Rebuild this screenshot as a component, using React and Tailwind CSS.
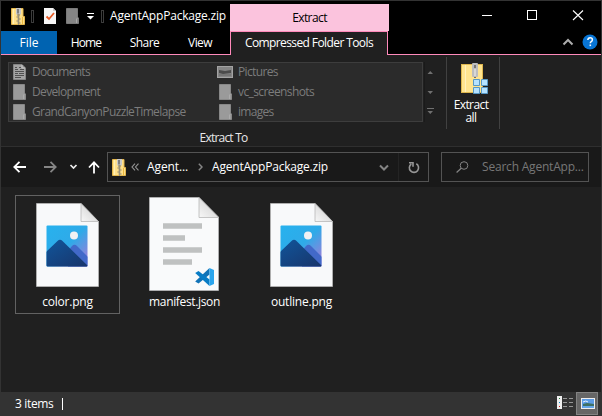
import React from 'react';

function ZipIcon({ className }) {
  return (
    <svg className={className} viewBox="0 0 14 17" aria-hidden="true">
      <path d="M0.5 0.5H12v8h1.5v8H0.5z" fill="#ffe08a" stroke="#e3b64c" />
      <path d="M2.5 1v15" stroke="#fff0b5" />
      <path d="M11.5 9v7" stroke="#eab83f" />
      <rect x="5" y="0" width="5" height="6.5" fill="#c9c9c9" />
      <rect x="6" y="1" width="2" height="4.5" fill="#808080" />
      <path d="M6 7h3M5.500 9h3M6.500 11h3M5.500 13h3M6.500 15h3" stroke="#77736a" strokeWidth="1" />
      <path d="M7.5 6v11" stroke="#99917c" strokeWidth="1" />
    </svg>
  );
}

function FolderIcon({ fill = '#9a9a9a', stroke = '#888888', className }) {
  return (
    <svg className={className} viewBox="0 0 14 16" aria-hidden="true">
      <path d="M0.500 0.500H11.500V10H12.500V15.500H0.500z" fill={fill} stroke={stroke} />
      <path d="M10.500 15v-4l1.500-1.500" stroke="#b3b3b3" strokeWidth="1" fill="none" opacity=".7" />
    </svg>
  );
}

function DocIcon() {
  return (
    <svg className="h-4 w-[14px]" viewBox="0 0 14 16" aria-hidden="true">
      <path d="M0.500 0.500H9L12.500 4V15.500H0.500z" fill="#a3a3a3" stroke="#858585" />
      <path d="M2 5.500h3M2 3.500h2M6 3.500h2M7 5.500h4M2 7.500h9M2 9.500h3M6 9.500h5M2 11.500h9M2 13.500h6" stroke="#505050" />
      <path d="M9 1v3h3" stroke="#c6c6c6" fill="none" />
    </svg>
  );
}

function PictureIcon() {
  return (
    <svg className="h-3 w-4" viewBox="0 0 16 12" aria-hidden="true">
      <rect x=".5" y=".5" width="15" height="11" fill="#858585" stroke="#a3a3a3" />
      <rect x="2" y="2" width="12" height="8" fill="#858585" />
      <path d="M2 4l6 1 6-1v3l-8 1-4-1z" fill="#4b4b4b" />
      <path d="M2 9h12" stroke="#666" />
    </svg>
  );
}

function ListEntry({ icon, label, text }) {
  return (
    <div className="flex h-5 items-center">
      <div className="flex w-[19px] items-center">{icon}</div>
      <span className={'whitespace-nowrap text-[12px] leading-5 text-[#7c7c7c] ' + text}>{label}</span>
    </div>
  );
}

function ImageFile({ id }) {
  return (
    <svg className="mb-[4px] h-[85px] w-[64px]" viewBox="0 0 64 85" aria-hidden="true">
      <defs>
        <linearGradient id={id + 'sky'} x1="0" y1="0" x2="1" y2="1">
          <stop offset="0" stopColor="#27b2ee" />
          <stop offset=".5" stopColor="#2faae8" />
          <stop offset=".85" stopColor="#8b84dc" />
        </linearGradient>
        <linearGradient id={id + 'hill'} x1="0" y1="0" x2="1" y2="1">
          <stop offset="0" stopColor="#10559b" />
          <stop offset="1" stopColor="#193469" />
        </linearGradient>
        <linearGradient id={id + 'fold'} x1="0" y1="1" x2="1" y2="0">
          <stop offset="0" stopColor="#f7f7f7" />
          <stop offset="1" stopColor="#c9c9c9" />
        </linearGradient>
        <clipPath id={id + 'clip'}><rect x="10.500" y="22.500" width="41" height="41" rx="1" /></clipPath>
      </defs>
      <path d="M.5.5H45L62.500 18.500V83.500H.5z" fill="#f8f9fa" stroke="#bdbdbd" strokeWidth=".7" />
      <path d="M45 .5V18.500H62.500z" fill={'url(#' + id + 'fold)'} stroke="#b8b8b8" strokeWidth=".8" />
      <g clipPath={'url(#' + id + 'clip)'}>
        <path d="M10 22h42v42H10z" fill={'url(#' + id + 'sky)'} />
        <path d="M32 48l4-5q2.500-2.500 5 0l12 12v9H32z" fill="#4269c9" />
        <path d="M10 49l11.500-11q2.500-2.500 5 0L53 64H10z" fill={'url(#' + id + 'hill)'} />
      </g>
      <circle cx="38" cy="32.500" r="4" fill="#f1f1f3" />
    </svg>
  );
}

function JsonFile() {
  return (
    <svg className="mb-px h-[94px] w-[71px]" viewBox="0 0 71 94" aria-hidden="true">
      <defs>
        <linearGradient id="jfold" x1="0" y1="1" x2="1" y2="0">
          <stop offset="0" stopColor="#f7f7f7" />
          <stop offset="1" stopColor="#c9c9c9" />
        </linearGradient>
      </defs>
      <path d="M.5.5H50L69.500 20V93.500H.5z" fill="#f9fafb" stroke="#bdbdbd" strokeWidth=".7" />
      <path d="M50 .5V20.500H69.500z" fill="url(#jfold)" stroke="#b8b8b8" strokeWidth=".8" />
      <path d="M14 29h39M14 41h22M14 53h39M14 65h29" stroke="#bfc1c1" strokeWidth="5.500" />
      <path d="M60.500 71v6.500L49.500 86.500l-3.300-2z" fill="#1173b7" />
      <path d="M60.500 89v-6.500L49.500 74l-3.300 2z" fill="#087cc5" />
      <path d="M60.500 71L65 73v14l-4.500 2z" fill="#2aa5ed" />
    </svg>
  );
}

function FileTile({ children, name, tile, text }) {
  return (
    <div className={'flex h-[119px] flex-col items-center ' + tile}>
      <div className="flex h-[96px] items-end justify-center">{children}</div>
      <span className={'whitespace-nowrap text-[12px] leading-[20px] text-white ' + text}>{name}</span>
    </div>
  );
}

function Separator({ className }) {
  return <div className={'h-[13px] w-[3px] border border-[#3c3c3c] ' + className} />;
}

export default function App() {
  return (
    <div className="flex h-[416px] w-[602px] flex-col overflow-hidden border-l border-t border-r border-[#333333] bg-[#202020] font-['Open_Sans','Noto_Sans',sans-serif] text-[12px] text-white">
      <header className="flex h-[54px] shrink-0 bg-black">
        <div className="flex w-[229px] flex-col">
          <div className="flex h-[30px] items-center">
            <ZipIcon className="ml-[10px] h-[17px] w-[14px]" />
            <Separator className="ml-[6px]" />
            <svg className="ml-[10px] h-4 w-3" viewBox="0 0 12 16" aria-hidden="true">
              <path d="M0 0h9l3 3v13H0z" fill="#f6f6f6" />
              <path d="M9 0v3h3" fill="#ccc" />
              <path d="M2.500 8.500L5 11l5-6" fill="none" stroke="#e85b26" strokeWidth="1.800" />
            </svg>
            <FolderIcon className="ml-[10px] h-4 w-[14px]" fill="#858585" stroke="#797979" />
            <svg className="ml-[7px] h-[7px] w-[7px]" viewBox="0 0 7 7" aria-hidden="true">
              <path d="M0 .5h7" stroke="#fff" />
              <path d="M0 3h7L3.500 6.500z" fill="#fff" />
            </svg>
            <Separator className="ml-[7px]" />
            <span className="ml-[6px] whitespace-nowrap text-[12px] tracking-[-0.2px]">AgentAppPackage.zip</span>
          </div>
          <nav className="flex h-6 border-b border-[#ff8abb] leading-[23px]">
            <span className="w-14 bg-[#0063b1] text-center">File</span>
            <span className="w-[58px] text-center tracking-[-0.9px]">Home</span>
            <span className="w-[59px] text-center tracking-[-0.6px]">Share</span>
            <span className="w-[52px] text-center tracking-[-0.6px]">View</span>
          </nav>
        </div>
        <div className="flex w-[159px] flex-col pt-[3px]">
          <div className="h-[27px] bg-[#fbc3dd] text-center leading-[27px] tracking-[-0.6px] text-black">Extract</div>
          <div className="h-6 w-[158px] whitespace-nowrap border-x border-t border-[#ff8abb] bg-[#202020] text-center leading-[22px] tracking-[-0.6px]">Compressed Folder Tools</div>
        </div>
        <div className="-ml-px flex flex-1 flex-col border-b border-[#ff8abb]">
          <svg className="h-[53px] w-[212px]" viewBox="388 1 212 53" fill="none" aria-hidden="true">
            <path d="M482 15.500h10" stroke="#fff" />
            <rect x="527.500" y="10.500" width="9" height="9" stroke="#fff" />
            <path d="M573 10.500l10 9.500M583 10.500L573 20" stroke="#fff" strokeWidth="1.100" />
            <path d="M563.500 44.500l4.500-4.500 4.500 4.500" stroke="#adadad" strokeWidth="2" />
            <circle cx="590" cy="42" r="7.500" fill="#0875d5" />
            <path d="M587.800 40q.2-2.300 2.400-2.300t2.200 2q0 1.200-1.200 2-.9.600-.9 1.500" stroke="#fff" strokeWidth="1.500" />
            <rect x="589.500" y="44.500" width="1.600" height="1.600" fill="#fff" />
          </svg>
        </div>
      </header>

      <section className="flex h-[92px] shrink-0 border-b border-[#2f2f2f]">
        <div className="flex w-[445px] flex-col pl-[7px] pt-[7px]">
          <div className="flex h-[60px]">
            <div className="flex w-[415px] border border-[#3d3d3d] bg-[#2b2b2b] pl-1">
              <div className="-mt-px w-[204px]">
                <ListEntry icon={<DocIcon />} label="Documents" text="tracking-[-0.7px]" />
                <ListEntry icon={<FolderIcon className="h-4 w-[14px]" />} label="Development" text="tracking-[-0.65px]" />
                <ListEntry icon={<FolderIcon className="h-4 w-[14px]" />} label="GrandCanyonPuzzleTimelapse" text="tracking-[-0.62px]" />
              </div>
              <div className="-mt-px">
                <ListEntry icon={<PictureIcon />} label="Pictures" text="ml-[2px] tracking-[-0.65px]" />
                <ListEntry icon={<FolderIcon className="ml-[2px] h-4 w-[14px]" />} label="vc_screenshots" text="ml-[2px] tracking-[-0.6px]" />
                <ListEntry icon={<FolderIcon className="ml-[2px] h-4 w-[14px]" />} label="images" text="ml-[2px] tracking-[-0.7px]" />
              </div>
            </div>
            <svg className="ml-px h-[60px] w-[13px]" viewBox="0 0 13 60" aria-hidden="true">
              <path d="M0 0v60" stroke="#151515" />
              <path d="M3.500 12h5.500L6.250 9zM3.500 29h5.500l-2.750 3zM3.500 49h5.500l-2.750 3z" fill="#707070" />
              <path d="M3 46.500h7" stroke="#707070" />
            </svg>
          </div>
          <div className="h-[28px] pr-[7px] pt-[3px] text-center leading-[26px] tracking-[-0.8px] text-[#e8e8e8]">Extract To</div>
        </div>
        <div className="mt-[2px] flex h-[72px] w-[54px] flex-col items-center border-x border-[#414141] pt-[6px]">
          <svg className="ml-[4px] h-[32px] w-[28px]" viewBox="0 0 28 32" aria-hidden="true">
            <rect x=".5" y="1.500" width="21" height="28" fill="#ffe48f" stroke="#dfb84f" />
            <path d="M4.500 2v27" stroke="#fff1bc" />
            <rect x="11" y="0" width="6" height="14" rx="1" fill="#bdbdbd" />
            <path d="M13 2h2v3h-2z" fill="#777" />
            <path d="M14 6v7" stroke="#f1f1f1" />
            <path d="M14 14v4" stroke="#746f5f" strokeWidth="2" strokeDasharray="1" />
            <path d="M12.500 16.500h6v6h-6zM20.500 16.500h6v6h-6zM12.500 24.500h6v6h-6zM20.500 24.500h6v6h-6z" fill="#b5e2ff" stroke="#5798c5" />
          </svg>
          <div className="-ml-1 pt-[3px] text-center leading-[13px] tracking-[-0.6px]">Extract<br />all</div>
        </div>
      </section>

      <div className="flex h-[40px] shrink-0 bg-[#191919] pt-[5px]">
        <svg className="h-[30px] w-[106px]" viewBox="1 152 106 30" fill="none" aria-hidden="true">
          <path d="M26 167H14.500M19.500 161.800L14.300 167l5.200 5.200" stroke="#fff" strokeWidth="1.800" />
          <path d="M44 167h11.500M50.500 161.800l5.200 5.200-5.200 5.200" stroke="#858585" strokeWidth="1.800" />
          <path d="M70.500 165l3 3 3-3" stroke="#ededed" strokeWidth="1.700" />
          <path d="M94 173.500v-11M89 167.500l5-5.200 5 5.200" stroke="#fff" strokeWidth="1.800" />
        </svg>
        <div className="flex h-[30px] w-[322px] items-center border border-[#535353]">
          <ZipIcon className="ml-1 h-[17px] w-[14px] shrink-0" />
          <svg className="ml-[5px] h-2 w-2 shrink-0" viewBox="0 0 8 8" fill="none" aria-hidden="true">
            <path d="M4 .7L1 4l3 3.300M7.500.7l-3 3.300 3 3.300" stroke="#969696" strokeWidth="1.100" />
          </svg>
          <span className="ml-2 w-[41px] shrink-0 whitespace-nowrap leading-[28px] tracking-[-0.1px]">Agent...</span>
          <svg className="ml-[10px] h-2 w-[5px] shrink-0" viewBox="0 0 5 8" fill="none" aria-hidden="true">
            <path d="M.8.8L4 4 .8 7.200" stroke="#858585" strokeWidth="1.500" />
          </svg>
          <span className="ml-[9px] w-[160px] shrink-0 whitespace-nowrap leading-[28px] tracking-[-0.2px]">AgentAppPackage.zip</span>
          <svg className="h-[28px] w-[56px] shrink-0" viewBox="372 153 56 28" fill="none" aria-hidden="true">
            <path d="M380 165.500l4 4 4-4" stroke="#858585" strokeWidth="2" />
            <path d="M398.500 153v28" stroke="#242424" />
            <path d="M416.300 163.800a4.600 4.600 0 1 1-5 .2M409 162.800h4v4" stroke="#969696" strokeWidth="1.600" />
          </svg>
        </div>
        <div className="ml-3 flex h-[30px] w-[148px] items-center border border-[#535353]">
          <svg className="ml-[14px] h-3 w-[13px]" viewBox="0 0 13 12" fill="none" aria-hidden="true">
            <circle cx="8" cy="4.500" r="3.800" stroke="#858585" />
            <path d="M5.200 7.200L.6 11.500" stroke="#858585" strokeWidth="1.200" />
          </svg>
          <span className="ml-[13px] whitespace-nowrap leading-[28px] tracking-[-0.2px] text-[#777777]">Search AgentApp...</span>
        </div>
      </div>

      <main className="flex flex-1 pl-[14px] pt-[8px]">
        <FileTile name="color.png" tile="w-[105px] border border-[#626262]" text="tracking-[-0.2px]">
          <ImageFile id="color" />
        </FileTile>
        <FileTile name="manifest.json" tile="ml-[12px] w-[105px] pt-px" text="tracking-[-0.35px]">
          <JsonFile />
        </FileTile>
        <FileTile name="outline.png" tile="ml-[12px] w-[105px] pt-px" text="tracking-[-0.2px]">
          <ImageFile id="outline" />
        </FileTile>
      </main>

      <footer className="flex h-6 shrink-0 items-center bg-[#333333]">
        <span className="ml-[14px] whitespace-nowrap leading-6 tracking-[-0.35px]">3 items</span>
        <div className="ml-[9px] h-3 w-px bg-white" />
        <svg className="ml-auto mr-[3px] h-6 w-[44px]" viewBox="553 392 44 24" aria-hidden="true">
          <path d="M556 396h5v13h-5z" fill="#eee" />
          <path d="M558 398h1v1h-1z" fill="#237a35" />
          <path d="M558 402h1v1h-1z" fill="#178bd1" />
          <path d="M558 406h1v1h-1z" fill="#d51c1c" />
          <path d="M562 398.500h4m2 0h4M562 402.500h4m2 0h4M562 406.500h4m2 0h4" stroke="#969696" />
          <rect x="575.500" y="392.500" width="21" height="22" fill="#666" stroke="#838383" />
          <rect x="580.500" y="398.500" width="13" height="10" fill="#5c9ce5" stroke="#eee" />
          <path d="M582 404l4-1 7 1v2h-11z" fill="#3e7065" />
          <path d="M582 402q3-2 5 0" stroke="#e9f4ff" fill="none" />
          <path d="M582 407h11" stroke="#71b0ec" />
        </svg>
      </footer>
    </div>
  );
}
